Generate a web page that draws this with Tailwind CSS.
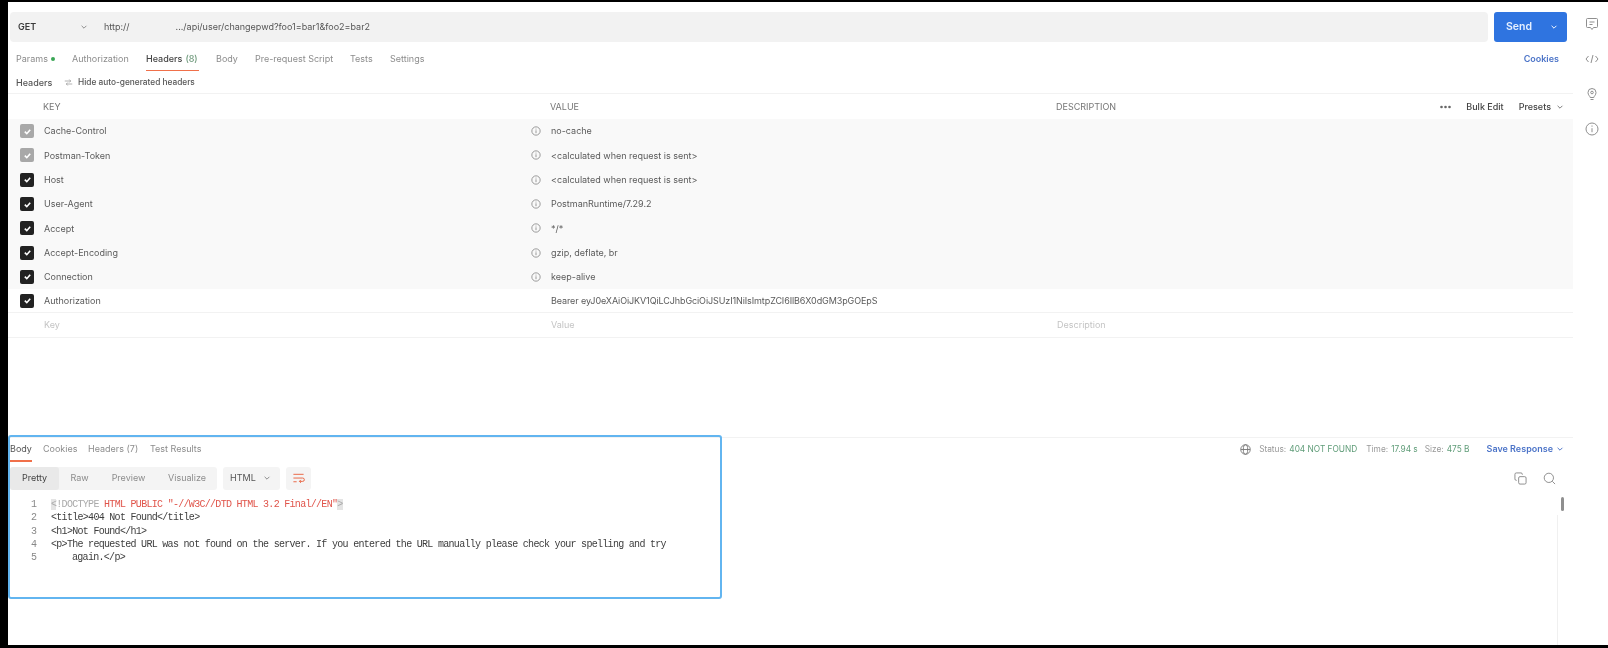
<!DOCTYPE html>
<html lang="en">
<head>
    <meta charset="UTF-8">
    <meta name="viewport" content="width=device-width, initial-scale=1.0">
    <title>Postman request</title>
    <script src="https://cdn.jsdelivr.net/npm/@tailwindcss/browser@4"></script>
</head>
<body class="bg-black">
<div class="relative w-[1608px] h-[648px] overflow-hidden bg-black pt-[2px] pl-[8px] pb-[3px] font-['Inter',sans-serif] text-[9px] text-[#6b6b6b] whitespace-nowrap blur-[0.6px]">
    <div class="flex h-[643px] bg-white">

        <!-- main column -->
        <div class="w-[1565px] flex flex-col">

            <!-- url bar -->
            <div class="flex pt-[10px] pl-[2px] pr-[6px] gap-[6px]">
                <div class="flex-1 h-[30px] bg-[#f2f2f2] flex items-center rounded-sm">
                    <span class="w-[70px] pl-[8px] font-semibold text-[#3a3a3a]">GET</span>
                    <svg class="w-[8px] h-[8px] text-[#8a8a8a]" viewBox="0 0 10 10" fill="none" stroke="currentColor" stroke-width="1.2"><path d="M2 3.5l3 3 3-3"/></svg>
                    <span class="ml-[16px] text-[#555]">http://</span>
                    <span class="w-[46px]"></span>
                    <span class="text-[#555]">.../api/user/changepwd?foo1=bar1&amp;foo2=bar2</span>
                </div>
                <div class="w-[73px] h-[30px] bg-[#2f74e0] rounded-[3px] flex items-center text-white">
                    <span class="pl-[12px] text-[10.5px] font-semibold text-[#e6f0ff]">Send</span>
                    <svg class="ml-auto mr-[9px] w-[8px] h-[8px]" viewBox="0 0 10 10" fill="none" stroke="currentColor" stroke-width="1.2"><path d="M2 3.5l3 3 3-3"/></svg>
                </div>
            </div>

            <!-- request tabs -->
            <div class="flex h-[29px] pt-[5px] pl-[8px] pr-[14px] items-center text-[#8c8c8c]">
                <span class="w-[56px] flex items-center">Params<span class="ml-[3px] w-[4px] h-[4px] rounded-full bg-[#3aa655]"></span></span>
                <span class="w-[74px]">Authorization</span>
                <span class="relative w-[70px] h-full flex items-center text-[#444] font-medium">Headers <span class="ml-[3px] text-[#6f9a7c]">(8)</span><span class="absolute left-0 bottom-0 w-[53px] h-[1.5px] bg-[#f0704a]"></span></span>
                <span class="w-[39px]">Body</span>
                <span class="w-[95px]">Pre-request Script</span>
                <span class="w-[40px]">Tests</span>
                <span>Settings</span>
                <span class="ml-auto font-semibold text-[#4c74c8]">Cookies</span>
            </div>

            <!-- headers sub bar -->
            <div class="flex h-[23px] pt-[1px] pl-[8px] items-center border-b border-[#f2f2f2]">
                <span class="w-[48px] text-[#555] font-medium">Headers</span>
                <svg class="w-[9px] h-[9px] text-[#999] mr-[5px]" viewBox="0 0 12 12" fill="none" stroke="currentColor" stroke-width="1"><path d="M1 4h8M7 2l2 2-2 2M11 8H3M5 6L3 8l2 2"/></svg>
                <span class="text-[#555] text-[8.3px] font-medium">Hide auto-generated headers</span>
            </div>

            <!-- column titles -->
            <div class="flex h-[25px] items-center text-[#777]">
                <span class="w-[542px] pl-[35px]">KEY</span>
                <span class="w-[506px]">VALUE</span>
                <span>DESCRIPTION</span>
                <svg class="ml-auto w-[11px] h-[4px] text-[#666]" viewBox="0 0 11 4" fill="currentColor"><circle cx="1.5" cy="2" r="1.3"/><circle cx="5.5" cy="2" r="1.3"/><circle cx="9.5" cy="2" r="1.3"/></svg>
                <span class="ml-[15px] font-medium text-[#444]">Bulk Edit</span>
                <span class="ml-[15px] font-medium text-[#444]">Presets</span>
                <svg class="ml-[5px] mr-[9px] w-[8px] h-[8px] text-[#777]" viewBox="0 0 10 10" fill="none" stroke="currentColor" stroke-width="1.2"><path d="M2 3.5l3 3 3-3"/></svg>
            </div>

            <!-- header rows -->
            <div class="flex flex-col text-[#5a5a5a]">
                <div class="flex h-[24.3px] items-center bg-[#f9f9f9]">
                    <span class="ml-[12px] w-[14px] h-[14px] rounded-[2px] bg-[#a8a8a8] flex items-center justify-center"><svg class="w-[9px] h-[9px] text-white" viewBox="0 0 10 10" fill="none" stroke="currentColor" stroke-width="1.8"><path d="M2 5.2l2.2 2.2L8 3"/></svg></span>
                    <span class="ml-[10px] w-[487px]">Cache-Control</span>
                    <svg class="w-[10px] h-[10px] text-[#888]" viewBox="0 0 12 12" fill="none" stroke="currentColor"><circle cx="6" cy="6" r="5"/><path d="M6 5.2v3.4M6 3.2v1"/></svg>
                    <span class="ml-[10px]">no-cache</span>
                </div>
                <div class="flex h-[24.3px] items-center bg-[#f9f9f9]">
                    <span class="ml-[12px] w-[14px] h-[14px] rounded-[2px] bg-[#a8a8a8] flex items-center justify-center"><svg class="w-[9px] h-[9px] text-white" viewBox="0 0 10 10" fill="none" stroke="currentColor" stroke-width="1.8"><path d="M2 5.2l2.2 2.2L8 3"/></svg></span>
                    <span class="ml-[10px] w-[487px]">Postman-Token</span>
                    <svg class="w-[10px] h-[10px] text-[#888]" viewBox="0 0 12 12" fill="none" stroke="currentColor"><circle cx="6" cy="6" r="5"/><path d="M6 5.2v3.4M6 3.2v1"/></svg>
                    <span class="ml-[10px]">&lt;calculated when request is sent&gt;</span>
                </div>
                <div class="flex h-[24.3px] items-center bg-[#f9f9f9]">
                    <span class="ml-[12px] w-[14px] h-[14px] rounded-[2px] bg-[#222] flex items-center justify-center"><svg class="w-[9px] h-[9px] text-white" viewBox="0 0 10 10" fill="none" stroke="currentColor" stroke-width="1.8"><path d="M2 5.2l2.2 2.2L8 3"/></svg></span>
                    <span class="ml-[10px] w-[487px]">Host</span>
                    <svg class="w-[10px] h-[10px] text-[#888]" viewBox="0 0 12 12" fill="none" stroke="currentColor"><circle cx="6" cy="6" r="5"/><path d="M6 5.2v3.4M6 3.2v1"/></svg>
                    <span class="ml-[10px]">&lt;calculated when request is sent&gt;</span>
                </div>
                <div class="flex h-[24.3px] items-center bg-[#f9f9f9]">
                    <span class="ml-[12px] w-[14px] h-[14px] rounded-[2px] bg-[#222] flex items-center justify-center"><svg class="w-[9px] h-[9px] text-white" viewBox="0 0 10 10" fill="none" stroke="currentColor" stroke-width="1.8"><path d="M2 5.2l2.2 2.2L8 3"/></svg></span>
                    <span class="ml-[10px] w-[487px]">User-Agent</span>
                    <svg class="w-[10px] h-[10px] text-[#888]" viewBox="0 0 12 12" fill="none" stroke="currentColor"><circle cx="6" cy="6" r="5"/><path d="M6 5.2v3.4M6 3.2v1"/></svg>
                    <span class="ml-[10px]">PostmanRuntime/7.29.2</span>
                </div>
                <div class="flex h-[24.3px] items-center bg-[#f9f9f9]">
                    <span class="ml-[12px] w-[14px] h-[14px] rounded-[2px] bg-[#222] flex items-center justify-center"><svg class="w-[9px] h-[9px] text-white" viewBox="0 0 10 10" fill="none" stroke="currentColor" stroke-width="1.8"><path d="M2 5.2l2.2 2.2L8 3"/></svg></span>
                    <span class="ml-[10px] w-[487px]">Accept</span>
                    <svg class="w-[10px] h-[10px] text-[#888]" viewBox="0 0 12 12" fill="none" stroke="currentColor"><circle cx="6" cy="6" r="5"/><path d="M6 5.2v3.4M6 3.2v1"/></svg>
                    <span class="ml-[10px]">*/*</span>
                </div>
                <div class="flex h-[24.3px] items-center bg-[#f9f9f9]">
                    <span class="ml-[12px] w-[14px] h-[14px] rounded-[2px] bg-[#222] flex items-center justify-center"><svg class="w-[9px] h-[9px] text-white" viewBox="0 0 10 10" fill="none" stroke="currentColor" stroke-width="1.8"><path d="M2 5.2l2.2 2.2L8 3"/></svg></span>
                    <span class="ml-[10px] w-[487px]">Accept-Encoding</span>
                    <svg class="w-[10px] h-[10px] text-[#888]" viewBox="0 0 12 12" fill="none" stroke="currentColor"><circle cx="6" cy="6" r="5"/><path d="M6 5.2v3.4M6 3.2v1"/></svg>
                    <span class="ml-[10px]">gzip, deflate, br</span>
                </div>
                <div class="flex h-[24.3px] items-center bg-[#f9f9f9]">
                    <span class="ml-[12px] w-[14px] h-[14px] rounded-[2px] bg-[#222] flex items-center justify-center"><svg class="w-[9px] h-[9px] text-white" viewBox="0 0 10 10" fill="none" stroke="currentColor" stroke-width="1.8"><path d="M2 5.2l2.2 2.2L8 3"/></svg></span>
                    <span class="ml-[10px] w-[487px]">Connection</span>
                    <svg class="w-[10px] h-[10px] text-[#888]" viewBox="0 0 12 12" fill="none" stroke="currentColor"><circle cx="6" cy="6" r="5"/><path d="M6 5.2v3.4M6 3.2v1"/></svg>
                    <span class="ml-[10px]">keep-alive</span>
                </div>
                <div class="flex h-[24.3px] items-center border-b border-[#f2f2f2]">
                    <span class="ml-[12px] w-[14px] h-[14px] rounded-[2px] bg-[#222] flex items-center justify-center"><svg class="w-[9px] h-[9px] text-white" viewBox="0 0 10 10" fill="none" stroke="currentColor" stroke-width="1.8"><path d="M2 5.2l2.2 2.2L8 3"/></svg></span>
                    <span class="ml-[10px] w-[507px]">Authorization</span>
                    <span class="tracking-[-0.1px]">Bearer eyJ0eXAiOiJKV1QiLCJhbGciOiJSUzI1NiIsImtpZCI6IlB6X0dGM3pGOEpS</span>
                </div>
                <div class="flex h-[24.3px] items-center border-b border-[#f2f2f2] text-[#c4c4c4]">
                    <span class="ml-[36px] w-[507px]">Key</span>
                    <span class="w-[506px]">Value</span>
                    <span>Description</span>
                </div>
            </div>

            <!-- response header -->
            <div class="flex h-[24px] mt-[99px] pr-[9px] items-center border-t border-[#f2f2f2] pl-[2px] text-[#8c8c8c]">
                <span class="relative w-[33px] h-full flex items-center text-[#555]">Body<span class="absolute left-0 bottom-[-1px] w-[22px] h-[1.5px] bg-[#f0704a]"></span></span>
                <span class="w-[45px]">Cookies</span>
                <span class="w-[62px]">Headers (7)</span>
                <span>Test Results</span>
                <svg class="ml-auto w-[11px] h-[11px] text-[#777]" viewBox="0 0 12 12" fill="none" stroke="currentColor" stroke-width="1"><circle cx="6" cy="6" r="5.2"/><ellipse cx="6" cy="6" rx="2.4" ry="5.2"/><path d="M1 6h10"/></svg>
                <span class="ml-[8px] text-[8.3px] text-[#999]">Status:</span>
                <span class="ml-[3px] text-[8.3px] text-[#5f9c78]">404 NOT FOUND</span>
                <span class="ml-[9px] text-[8.3px] text-[#999]">Time:</span>
                <span class="ml-[3px] text-[8.3px] text-[#5f9c78]">17.94 s</span>
                <span class="ml-[7px] text-[8.3px] text-[#999]">Size:</span>
                <span class="ml-[3px] text-[8.3px] text-[#5f9c78]">475 B</span>
                <span class="ml-[17px] font-semibold text-[#4c74c8]">Save Response</span>
                <svg class="ml-[3px] w-[8px] h-[8px] text-[#4c74c8]" viewBox="0 0 10 10" fill="none" stroke="currentColor" stroke-width="1.2"><path d="M2 3.5l3 3 3-3"/></svg>
            </div>

            <!-- response toolbar -->
            <div class="flex mt-[6px] h-[23px] pl-[2px] gap-[6px] items-stretch text-[#8c8c8c]">
                <div class="w-[207px] bg-[#f4f4f4] flex items-center rounded-[3px]">
                    <span class="w-[49px] h-full bg-[#e9e9e9] rounded-[3px] flex items-center justify-center text-[#444]">Pretty</span>
                    <span class="w-[41px] text-center">Raw</span>
                    <span class="w-[57px] text-center">Preview</span>
                    <span class="w-[60px] text-center">Visualize</span>
                </div>
                <div class="w-[57px] bg-[#f4f4f4] rounded-[3px] flex items-center pl-[7px] text-[#555]">
                    HTML
                    <svg class="ml-auto mr-[9px] w-[8px] h-[8px] text-[#888]" viewBox="0 0 10 10" fill="none" stroke="currentColor" stroke-width="1.2"><path d="M2 3.5l3 3 3-3"/></svg>
                </div>
                <div class="w-[25px] bg-[#f4f4f4] rounded-[3px] flex items-center justify-center">
                    <svg class="w-[13px] h-[13px] text-[#e8603c]" viewBox="0 0 14 14" fill="none" stroke="currentColor" stroke-width="1"><path d="M1.5 2.5h11M1.5 6.5h10a1.8 1.8 0 010 3.6H8M9.5 8.5L8 10.1l1.5 1.6M1.5 10.5h3.5"/></svg>
                </div>
                <svg class="ml-[1197px] self-center w-[13px] h-[13px] text-[#888]" viewBox="0 0 14 14" fill="none" stroke="currentColor" stroke-width="1"><rect x="5" y="5" width="8" height="8" rx="1.5"/><path d="M3 9H2.5A1.5 1.5 0 011 7.500V2.500A1.500 1.500 0 012.500 1h5A1.500 1.500 0 019 2.500V3"/></svg>
                <svg class="ml-[10px] self-center w-[13px] h-[13px] text-[#888]" viewBox="0 0 14 14" fill="none" stroke="currentColor" stroke-width="1"><circle cx="6.300" cy="6.300" r="5"/><path d="M10 10l3 3"/></svg>
            </div>

            <!-- response body -->
            <div class="relative flex-1 pt-[8.5px] pl-[23px] font-['Liberation_Mono',monospace] text-[10px] tracking-[-0.7px] leading-[13.2px] text-[#3d3d3d]">
                <div class="flex"><span class="w-[20px] text-[#888]">1</span><span><span class="text-[#aaa] bg-[linear-gradient(90deg,#e4e4e4_5px,transparent_5px)]">&lt;!DOCTYPE</span> <span class="text-[#e0544a]">HTML PUBLIC "-//W3C//DTD HTML 3.2 Final//EN"</span><span class="text-[#aaa] bg-[#e4e4e4]">&gt;</span></span></div>
                <div class="flex"><span class="w-[20px] text-[#888]">2</span><span>&lt;title&gt;404 Not Found&lt;/title&gt;</span></div>
                <div class="flex"><span class="w-[20px] text-[#888]">3</span><span>&lt;h1&gt;Not Found&lt;/h1&gt;</span></div>
                <div class="flex"><span class="w-[20px] text-[#888]">4</span><span>&lt;p&gt;The requested URL was not found on the server. If you entered the URL manually please check your spelling and try</span></div>
                <div class="flex"><span class="w-[20px] text-[#888]">5</span><span class="pl-[21px]">again.&lt;/p&gt;</span></div>
                <span class="absolute left-[1553px] top-[7px] w-[3px] h-[14px] bg-[#8f8f8f] rounded-sm"></span>
                <span class="absolute left-[1549px] top-[25px] bottom-0 w-px bg-[#f0f0f0]"></span>
            </div>
        </div>

        <!-- right sidebar -->
        <div class="w-[35px] flex flex-col items-center pt-[15px] gap-[20px] text-[#8f8f8f] pl-[2px]">
            <svg class="w-[14px] h-[14px]" viewBox="0 0 14 14" fill="none" stroke="currentColor" stroke-width="1"><path d="M2.500 1.500h9a1 1 0 011 1v7a1 1 0 01-1 1H8.500L7 12.500 5.500 10.500h-3a1 1 0 01-1-1v-7a1 1 0 011-1zM4.500 5h5M4.500 7.500h3"/></svg>
            <svg class="w-[14px] h-[14px] mt-[1px]" viewBox="0 0 14 14" fill="none" stroke="currentColor" stroke-width="1"><path d="M3.500 4L1 7l2.500 3M10.500 4L13 7l-2.500 3M8 3L6 11"/></svg>
            <svg class="w-[14px] h-[14px] mt-[1px]" viewBox="0 0 14 14" fill="none" stroke="currentColor" stroke-width="1"><path d="M5.200 10.500C5 9 3 8.200 3 5.500a4 4 0 018 0c0 2.700-2 3.500-2.200 5zM5.500 12.500h3"/><circle cx="7" cy="5.500" r="1.300"/></svg>
            <svg class="w-[14px] h-[14px] mt-[1px]" viewBox="0 0 14 14" fill="none" stroke="currentColor" stroke-width="1"><circle cx="7" cy="7" r="6"/><path d="M7 6.200v4M7 3.500v1.200"/></svg>
        </div>
    </div>

    <!-- blue highlight drawn over the response panel -->
    <div class="absolute left-[8px] top-[435px] w-[714px] h-[164px] border-2 border-[#62b5f0] rounded-[3px] pointer-events-none"></div>
</div>
</body>
</html>
